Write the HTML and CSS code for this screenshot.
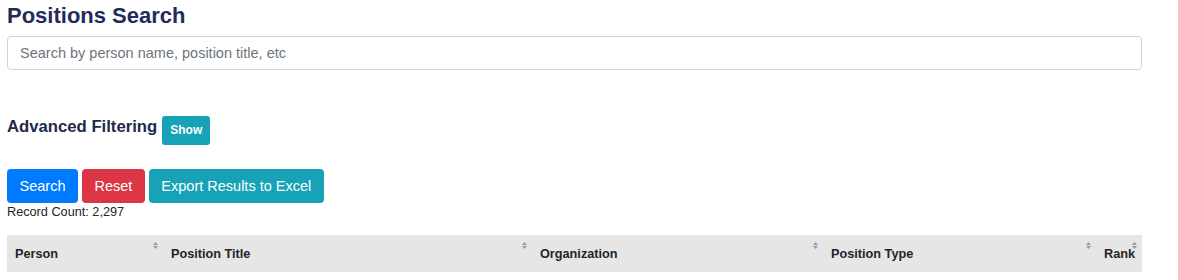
FILE: index.html
```html
<!DOCTYPE html>
<html lang="en">
<head>
<meta charset="utf-8">
<title>Positions Search</title>
<link rel="stylesheet" href="styles.css">
</head>
<body>
<div class="page">
  <h1 class="title">Positions Search</h1>
  <input class="search-input" type="text" placeholder="Search by person name, position title, etc">

  <div class="filter-row">
    <h5 class="filter-title">Advanced Filtering</h5>
    <button class="btn-show" type="button">Show</button>
  </div>

  <div class="actions">
    <button class="btn btn-primary" type="button">Search</button>
    <button class="btn btn-danger" type="button">Reset</button>
    <button class="btn btn-info" type="button">Export Results to Excel</button>
  </div>
  <div class="record-count">Record Count: 2,297</div>

  <table class="results">
    <colgroup>
      <col class="c-person">
      <col class="c-title">
      <col class="c-org">
      <col class="c-type">
      <col class="c-rank">
    </colgroup>
    <thead>
      <tr>
        <th>Person<svg class="sort" viewBox="0 0 5 7" width="5" height="7"><path d="M0 3 L2.5 0 L5 3 Z M0 4 L5 4 L2.5 7 Z"/></svg></th>
        <th>Position Title<svg class="sort" viewBox="0 0 5 7" width="5" height="7"><path d="M0 3 L2.5 0 L5 3 Z M0 4 L5 4 L2.5 7 Z"/></svg></th>
        <th>Organization<svg class="sort" viewBox="0 0 5 7" width="5" height="7"><path d="M0 3 L2.5 0 L5 3 Z M0 4 L5 4 L2.5 7 Z"/></svg></th>
        <th>Position Type<svg class="sort" viewBox="0 0 5 7" width="5" height="7"><path d="M0 3 L2.5 0 L5 3 Z M0 4 L5 4 L2.5 7 Z"/></svg></th>
        <th>Rank<svg class="sort" viewBox="0 0 5 7" width="5" height="7"><path d="M0 3 L2.5 0 L5 3 Z M0 4 L5 4 L2.5 7 Z"/></svg></th>
      </tr>
    </thead>
  </table>
</div>
</body>
</html>
```

FILE: styles.css
```css
html, body {
  margin: 0;
  padding: 0;
  background: #ffffff;
}

body {
  font-family: "Liberation Sans", Arial, sans-serif;
  color: #212529;
}

.page {
  width: 1135px;
  margin-left: 7px;
  padding-top: 3px;
}

.title {
  margin: 0;
  font-size: 22px;
  line-height: 26px;
  font-weight: 700;
  color: #1f2c5a;
}

.search-input {
  display: block;
  box-sizing: border-box;
  width: 100%;
  height: 34px;
  margin-top: 7px;
  padding: 0 12px;
  border: 1px solid #ced4da;
  border-radius: 4px;
  font-family: "Liberation Sans", Arial, sans-serif;
  font-size: 14.5px;
  color: #495057;
  background: #fff;
  outline: none;
}

.search-input::placeholder {
  color: #6c757d;
  opacity: 1;
}

.filter-row {
  display: flex;
  align-items: flex-start;
  gap: 5px;
  margin-top: 46px;
}

.filter-title {
  margin: 1px 0 0;
  font-size: 16.7px;
  line-height: 19px;
  font-weight: 700;
  color: #212a4c;
}

.btn-show {
  height: 29px;
  padding: 0 8px;
  border: none;
  border-radius: 3px;
  background: #17a2b8;
  color: #fff;
  font-family: "Liberation Sans", Arial, sans-serif;
  font-size: 12px;
  font-weight: 700;
  line-height: 29px;
}

.actions {
  display: flex;
  gap: 4px;
  margin-top: 24px;
}

.btn {
  height: 34px;
  padding: 0 12.5px;
  border: none;
  border-radius: 4px;
  color: #fff;
  font-family: "Liberation Sans", Arial, sans-serif;
  font-size: 14.5px;
  line-height: 34px;
}

.btn-primary { background: #007bff; }
.btn-danger  { background: #dc3545; }
.btn-info    { background: #17a2b8; }

.record-count {
  margin-top: 2px;
  font-size: 12.7px;
  line-height: 14px;
  color: #212529;
}

.results {
  margin-top: 16px;
  width: 1135px;
  table-layout: fixed;
  border-collapse: collapse;
}

.c-person { width: 156px; }
.c-title  { width: 369px; }
.c-org    { width: 291px; }
.c-type   { width: 273px; }
.c-rank   { width: 46px; }

.results th {
  position: relative;
  background: #e6e6e6;
  padding: 12px 0 10px 8px;
  text-align: left;
  font-size: 12.7px;
  line-height: 15px;
  font-weight: 700;
  color: #212529;
  white-space: nowrap;
  overflow: visible;
}

.sort {
  position: absolute;
  top: 7px;
  right: 5px;
  fill: #999999;
}
```
